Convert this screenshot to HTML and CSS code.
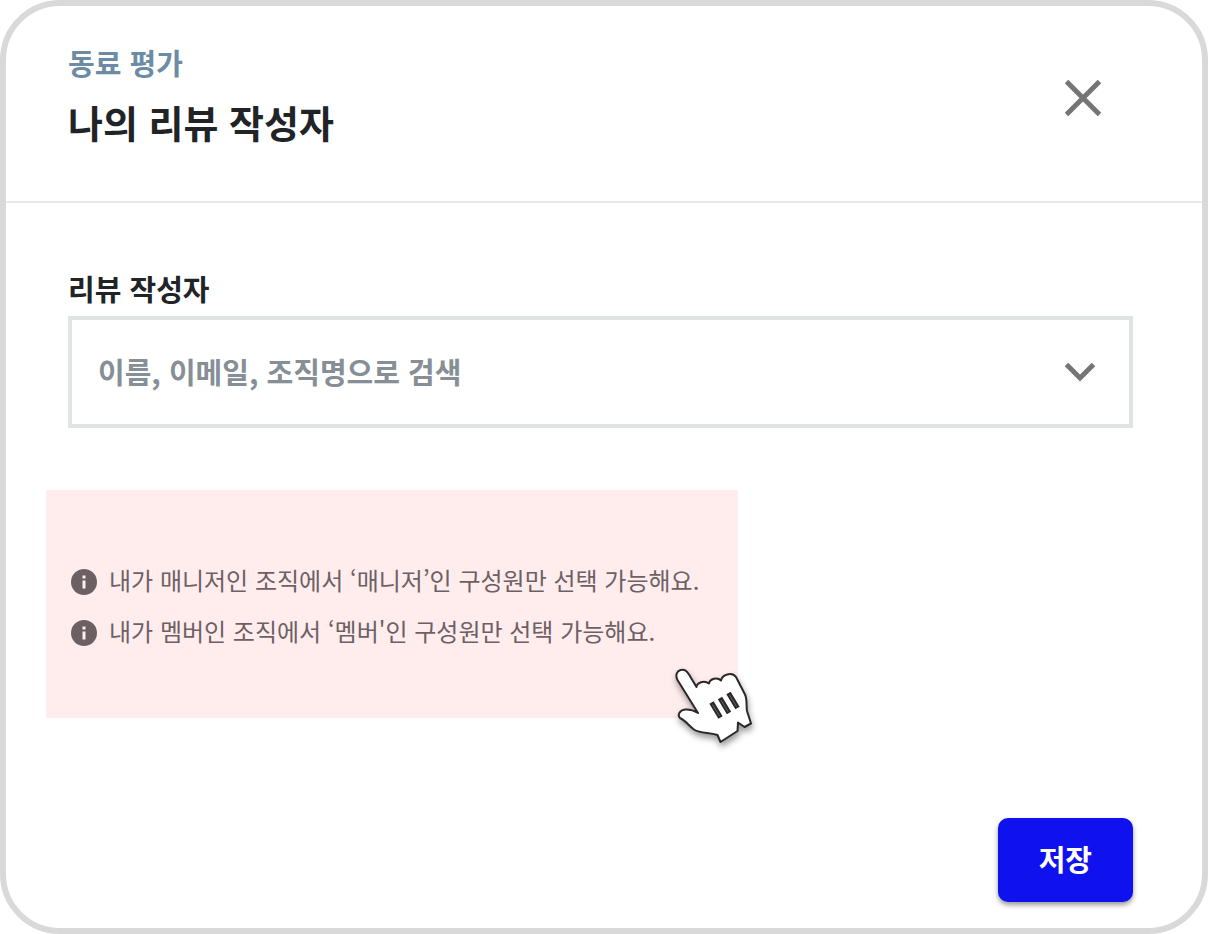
FILE: index.html
```html
<!DOCTYPE html>
<html lang="ko">

<head>
    <meta charset="UTF-8">
    <meta name="viewport" content="width=device-width, initial-scale=1.0">
    <title>나의 리뷰 작성자</title>
    <link rel="stylesheet" href="styles.css">
</head>

<body>
    <main class="modal">
        <header class="modal-header">
            <div>
                <p class="subtitle">동료 평가</p>
                <h1 class="title">나의 리뷰 작성자</h1>
            </div>
            <button type="button" class="close" aria-label="닫기">
                <svg width="36" height="36" viewBox="0 0 36 36">
                    <path d="M1.5 1.5 34.5 34.5M34.5 1.5 1.5 34.5" stroke="#757575" stroke-width="5" />
                </svg>
            </button>
        </header>

        <form class="modal-body">
            <div class="field">
                <label for="reviewer">리뷰 작성자</label>
                <div class="select-box">
                    <select id="reviewer">
                        <option>이름, 이메일, 조직명으로 검색</option>
                    </select>
                    <svg class="caret" width="32" height="20" viewBox="0 0 32 20">
                        <path d="M2.5 2.5 16 16 29.5 2.5" fill="none" stroke="#757575" stroke-width="5" />
                    </svg>
                </div>
            </div>

            <div class="notice">
                <ul>
                    <li>
                        <svg class="info" width="26" height="26" viewBox="0 0 26 26">
                            <circle cx="13" cy="13" r="13" fill="#6d6064" />
                            <path d="M11.5 6.5h3v3h-3zM11.5 11.5h3v8h-3z" fill="#ffedee" />
                        </svg>
                        내가 매니저인 조직에서 ‘매니저’인 구성원만 선택 가능해요.
                    </li>
                    <li>
                        <svg class="info" width="26" height="26" viewBox="0 0 26 26">
                            <circle cx="13" cy="13" r="13" fill="#6d6064" />
                            <path d="M11.5 6.5h3v3h-3zM11.5 11.5h3v8h-3z" fill="#ffedee" />
                        </svg>
                        내가 멤버인 조직에서 ‘멤버'인 구성원만 선택 가능해요.
                    </li>
                </ul>
                <!-- hand pointer -->
                <svg class="pointer" width="110" height="105" viewBox="0 0 110 105">
                    <path d="M38 58 17.500 25C15 20 17 16 20.500 15 24 14 27 16 29 19.500L36.500 32C37 27.500 44 25 49 28.500 50 24 57 21.500 61 25.500 62 19.500 72 16.500 76 22L85 39.500C87.500 45 86 51 87 56L91 68.500 84.500 72 78 67.500 77.500 76 60.500 87 57.500 80C49 77 41 79 34 74.500 29 71 25.500 65.500 20 63 17 60 20 55 25 54.500 30 54 34 55.500 38 58Z" fill="#fff" stroke="#2b2829" stroke-width="2" stroke-linejoin="round" />
                    <path d="M51.500 47.500 60.500 62.500M60 43 69 58M68.500 38 77.500 53" stroke="#2b2829" stroke-width="5" />
                    <path d="M52.500 49.500 59.500 61M61 45 68 56.500M69.500 40 76.500 51.500" stroke="#666" stroke-width="1" />
                </svg>
            </div>

            <button type="submit" class="save">저장</button>
        </form>
    </main>
</body>

</html>
```
FILE: styles.css
```css
* {
    box-sizing: border-box;
}

body {
    margin: 0;
    background-color: #fff;
    font-family: "Noto Sans CJK KR", sans-serif;
    color: #212427;
}

.modal {
    display: flex;
    flex-direction: column;
    min-height: 100vh;
    border: 6px solid #d9d9d9;
    border-radius: 60px;
}

.modal-header {
    display: flex;
    justify-content: space-between;
    align-items: flex-start;
    padding: 34px 95px 49px 62px;
    border-bottom: 2px solid #e8e8e8;
}

.subtitle {
    margin: 0;
    font-size: 29px;
    font-weight: 700;
    line-height: 44px;
    color: #6c8ba4;
}

.title {
    margin: 8px 0 0;
    font-size: 38px;
    font-weight: 700;
    line-height: 60px;
}

.close {
    display: flex;
    margin-top: 34px;
    padding: 6px;
    border: none;
    background: none;
    cursor: pointer;
}

.modal-body {
    display: flex;
    flex-direction: column;
    flex: 1;
    padding: 63px 69px 26px 40px;
}

.field {
    margin-left: 22px;
}

.field label {
    display: block;
    margin-bottom: 6px;
    font-size: 29px;
    font-weight: 700;
    line-height: 44px;
}

/* the caret shares the grid cell with the select */
.select-box {
    display: grid;
    align-items: center;
}

.select-box select,
.caret {
    grid-area: 1 / 1;
}

.select-box select {
    appearance: none;
    width: 100%;
    height: 112px;
    padding: 0 80px 2px 26px;
    border: 4px solid #e0e4e4;
    border-radius: 0;
    background-color: #fff;
    font-family: inherit;
    font-size: 29px;
    font-weight: 700;
    color: #868e96;
}

.caret {
    justify-self: end;
    margin-right: 37px;
    pointer-events: none;
}

.notice {
    position: relative;
    align-self: flex-start;
    margin: 62px 0;
    padding: 72px 39px 69px 25px;
    background-color: #ffedee;
}

.notice ul {
    display: flex;
    flex-direction: column;
    gap: 15px;
    margin: 0;
    padding: 0;
    list-style: none;
}

.notice li {
    display: flex;
    align-items: center;
    gap: 12px;
    font-size: 24px;
    line-height: 36px;
    color: #6d6064;
}

.info {
    flex-shrink: 0;
    margin-top: 4px;
}

.pointer {
    position: absolute;
    right: -32px;
    bottom: -42px;
    filter: drop-shadow(1px 4px 3px rgba(0, 0, 0, 0.4));
}

.save {
    align-self: flex-end;
    margin-top: auto;
    padding: 18px 41px 22px;
    border: none;
    border-radius: 10px;
    background-color: #0f12ee;
    box-shadow: 0 3px 5px rgba(0, 0, 0, 0.4);
    font-family: inherit;
    font-size: 29px;
    font-weight: 700;
    line-height: 44px;
    color: #fff;
    cursor: pointer;
}
```
